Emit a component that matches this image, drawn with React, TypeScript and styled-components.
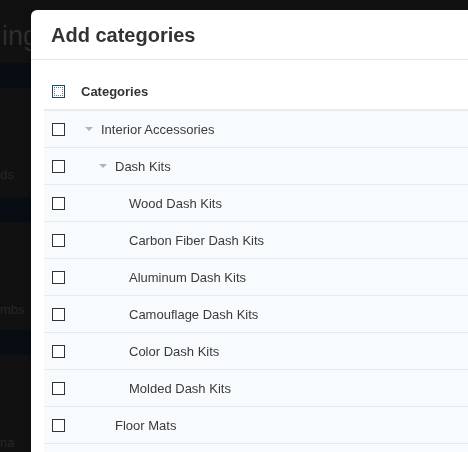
import styled, { createGlobalStyle } from "styled-components";

type Category = { name: string; level: number; expandable?: boolean };

const categories: Category[] = [
  { name: "Interior Accessories", level: 0, expandable: true },
  { name: "Dash Kits", level: 1, expandable: true },
  { name: "Wood Dash Kits", level: 2 },
  { name: "Carbon Fiber Dash Kits", level: 2 },
  { name: "Aluminum Dash Kits", level: 2 },
  { name: "Camouflage Dash Kits", level: 2 },
  { name: "Color Dash Kits", level: 2 },
  { name: "Molded Dash Kits", level: 2 },
  { name: "Floor Mats", level: 1 },
];

export default function App() {
  return (
    <>
      <GlobalStyle />
      <Page>
        <PageTitle>ing</PageTitle>
        <NavBar $gap={12} />
        <SideLabel $gap={79}>ds</SideLabel>
        <NavBar $gap={14} />
        <SideLabel $gap={80}>mbs</SideLabel>
        <NavBar $gap={12} />
        <SideLabel $gap={80}>na</SideLabel>
      </Page>

      <Modal>
        <Header>
          <Title>Add categories</Title>
        </Header>
        <Body>
          <HeadRow>
            <CheckCell>
              <Check $focused />
            </CheckCell>
            <HeadLabel>Categories</HeadLabel>
          </HeadRow>
          {categories.map((c, key) => (
            <Row key={key}>
              <CheckCell>
                <Check />
              </CheckCell>
              <Name $level={c.level}>
                <Toggle>{c.expandable && <Caret />}</Toggle>
                {c.name}
              </Name>
            </Row>
          ))}
          <Row />
        </Body>
      </Modal>
    </>
  );
}

const GlobalStyle = createGlobalStyle`
  html, body {
    margin: 0;
    height: 100%;
    overflow: hidden;
    background: #111111;
    font-family: "Liberation Sans", Arial, sans-serif;
  }
`;

const Page = styled.div`
  display: flex;
  flex-direction: column;
  padding-top: 21px;
  height: 452px;
  box-sizing: border-box;
`;

const PageTitle = styled.div`
  font-size: 27px;
  line-height: 30px;
  height: 30px;
  color: #2e2e2e;
  padding-left: 2px;
`;

const NavBar = styled.div<{ $gap: number }>`
  flex-shrink: 0;
  height: 25px;
  margin-top: ${(p) => p.$gap}px;
  width: 40px;
  background: #070d13;
`;

const SideLabel = styled.div<{ $gap: number }>`
  flex-shrink: 0;
  font-size: 13px;
  line-height: 16px;
  height: 16px;
  margin-top: ${(p) => p.$gap}px;
  color: #262626;
`;

const Modal = styled.div`
  position: fixed;
  left: 31px;
  top: 10px;
  width: 620px;
  height: 560px;
  background: #ffffff;
  border-radius: 6px;
  box-shadow: 0 3px 7px rgba(0, 0, 0, 0.3);
  overflow: hidden;
`;

const Header = styled.div`
  height: 49px;
  display: flex;
  align-items: center;
  padding: 1px 20px 0;
  box-sizing: border-box;
  border-bottom: 1px solid #e5e5e5;
  height: 50px;
`;

const Title = styled.h3`
  margin: 0;
  font-size: 20px;
  font-weight: bold;
  color: #333333;
`;

const Body = styled.div`
  padding: 13px 0 0 13px;
`;

const HeadRow = styled.div`
  display: flex;
  align-items: center;
  height: 36px;
  border-bottom: 2px solid #e9ecee;
`;

const Row = styled.div`
  display: flex;
  align-items: center;
  height: 36px;
  background: #f8fbfd;
  border-bottom: 1px solid #e6ebee;
`;

const CheckCell = styled.div`
  width: 37px;
  padding-left: 8px;
  box-sizing: border-box;
  display: flex;
  align-items: center;
`;

const Check = styled.span<{ $focused?: boolean }>`
  display: block;
  width: 13px;
  height: 13px;
  box-sizing: border-box;
  background: #ffffff;
  border: 1px solid ${(p) => (p.$focused ? "#1f4963" : "#333333")};
  outline: ${(p) => (p.$focused ? "1px dotted #5a7a90" : "none")};
  outline-offset: -3px;
`;

const HeadLabel = styled.div`
  font-size: 13px;
  font-weight: bold;
  color: #333333;
`;

const Name = styled.div<{ $level: number }>`
  display: flex;
  align-items: center;
  padding-left: ${(p) => p.$level * 14}px;
  font-size: 13px;
  color: #3a3a3a;
`;

const Toggle = styled.span`
  width: 20px;
  display: flex;
  align-items: center;
  padding-left: 4px;
  box-sizing: border-box;
`;

const Caret = styled.span`
  width: 0;
  height: 0;
  border-left: 4px solid transparent;
  border-right: 4px solid transparent;
  border-top: 4px solid #b3b3b3;
`;
